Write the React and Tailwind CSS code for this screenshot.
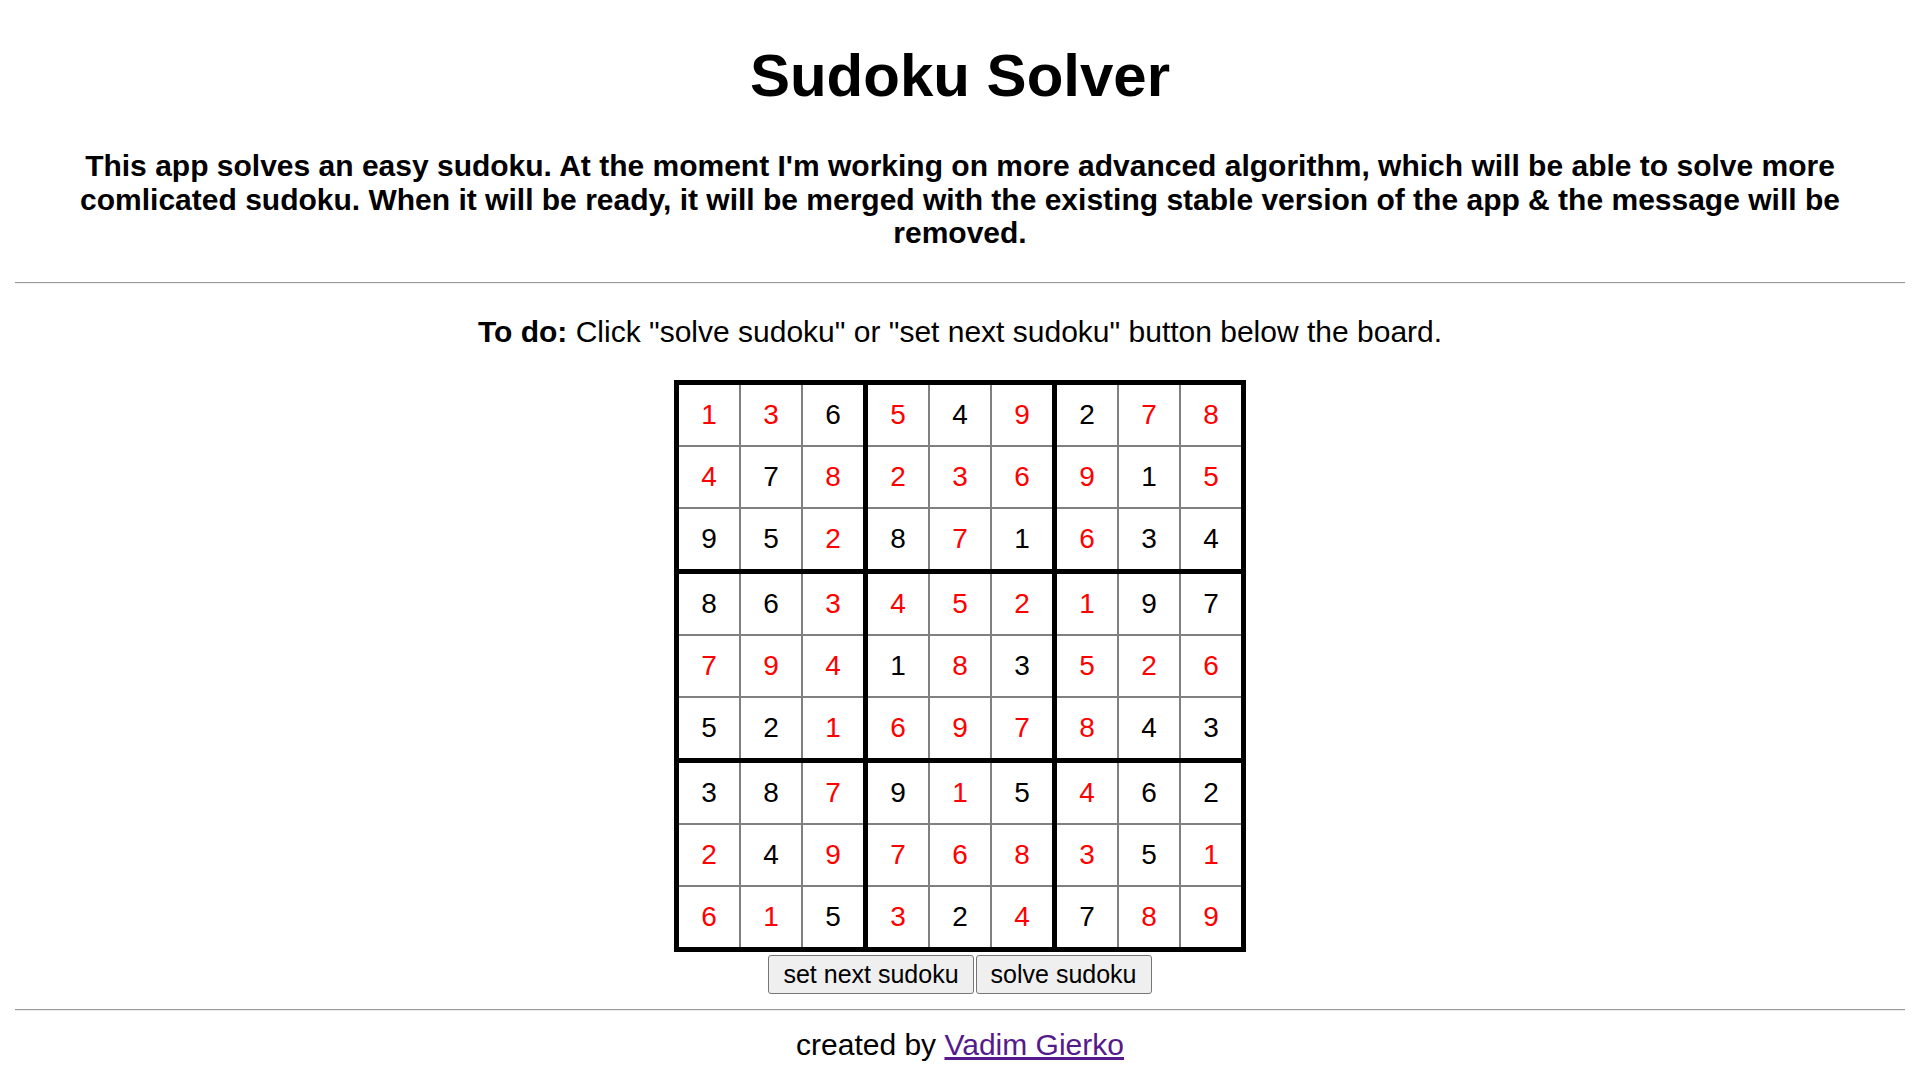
import React from 'react';

// 'r' marks a digit the solver filled in (shown in red)
const BOARD = [
  ['1r', '3r', '6', '5r', '4', '9r', '2', '7r', '8r'],
  ['4r', '7', '8r', '2r', '3r', '6r', '9r', '1', '5r'],
  ['9', '5', '2r', '8', '7r', '1', '6r', '3', '4'],
  ['8', '6', '3r', '4r', '5r', '2r', '1r', '9', '7'],
  ['7r', '9r', '4r', '1', '8r', '3', '5r', '2r', '6r'],
  ['5', '2', '1r', '6r', '9r', '7r', '8r', '4', '3'],
  ['3', '8', '7r', '9', '1r', '5', '4r', '6', '2'],
  ['2r', '4', '9r', '7r', '6r', '8r', '3r', '5', '1r'],
  ['6r', '1r', '5', '3r', '2', '4r', '7', '8r', '9r'],
];

function Block({ br, bc }) {
  const cells = [];
  for (let r = 0; r < 3; r++) {
    for (let c = 0; c < 3; c++) {
      const v = BOARD[br * 3 + r][bc * 3 + c];
      const solved = v.endsWith('r');
      cells.push(
        <div
          key={`${r}-${c}`}
          className={`w-[60px] h-[60px] bg-white flex items-center justify-center text-[28px] leading-none ${solved ? 'text-[#ff0000]' : 'text-black'}`}
        >
          {v[0]}
        </div>
      );
    }
  }
  return <div className="grid grid-cols-3 gap-[2px] bg-[#808080]">{cells}</div>;
}

function Board() {
  const blocks = [];
  for (let br = 0; br < 3; br++) {
    for (let bc = 0; bc < 3; bc++) {
      blocks.push(<Block key={`${br}-${bc}`} br={br} bc={bc} />);
    }
  }
  return (
    <div className="grid grid-cols-3 gap-[5px] bg-black border-[5px] border-black">
      {blocks}
    </div>
  );
}

export default function App() {
  return (
    <div className="min-h-screen bg-white text-black text-center px-[15px] font-['Liberation_Sans',Arial,sans-serif]">
      <h1 className="pt-[41px] text-[60px] leading-[69px] font-bold">Sudoku Solver</h1>

      <p className="mt-[39px] px-[40px] text-[30px] leading-[33.6px] font-bold">
        This app solves an easy sudoku. At the moment I'm working on more advanced algorithm, which will be able to solve more comlicated sudoku. When it will be ready, it will be merged with the existing stable version of the app &amp; the message will be removed.
      </p>

      <hr className="mt-[32px] h-0 border-t border-b border-t-[#9a9a9a] border-b-[#eeeeee]" />

      <p className="mt-[31px] text-[30px] leading-[33.6px]">
        <b>To do:</b> Click "solve sudoku" or "set next sudoku" button below the board.
      </p>

      <div className="mt-[32px] flex flex-col items-center">
        <Board />
        <div className="mt-[3px] flex gap-[2px]">
          <button className="px-[14px] py-[4px] text-[25px] leading-[29px] bg-[#efefef] border border-[#767676] rounded-[3px] text-black">
            set next sudoku
          </button>
          <button className="px-[14px] py-[4px] text-[25px] leading-[29px] bg-[#efefef] border border-[#767676] rounded-[3px] text-black">
            solve sudoku
          </button>
        </div>
      </div>

      <hr className="mt-[15px] h-0 border-t border-b border-t-[#9a9a9a] border-b-[#eeeeee]" />

      <p className="mt-[17px] text-[30px] leading-[34.5px]">
        created by{' '}
        <a href="#" className="text-[#551a8b] underline">
          Vadim Gierko
        </a>
      </p>
    </div>
  );
}
